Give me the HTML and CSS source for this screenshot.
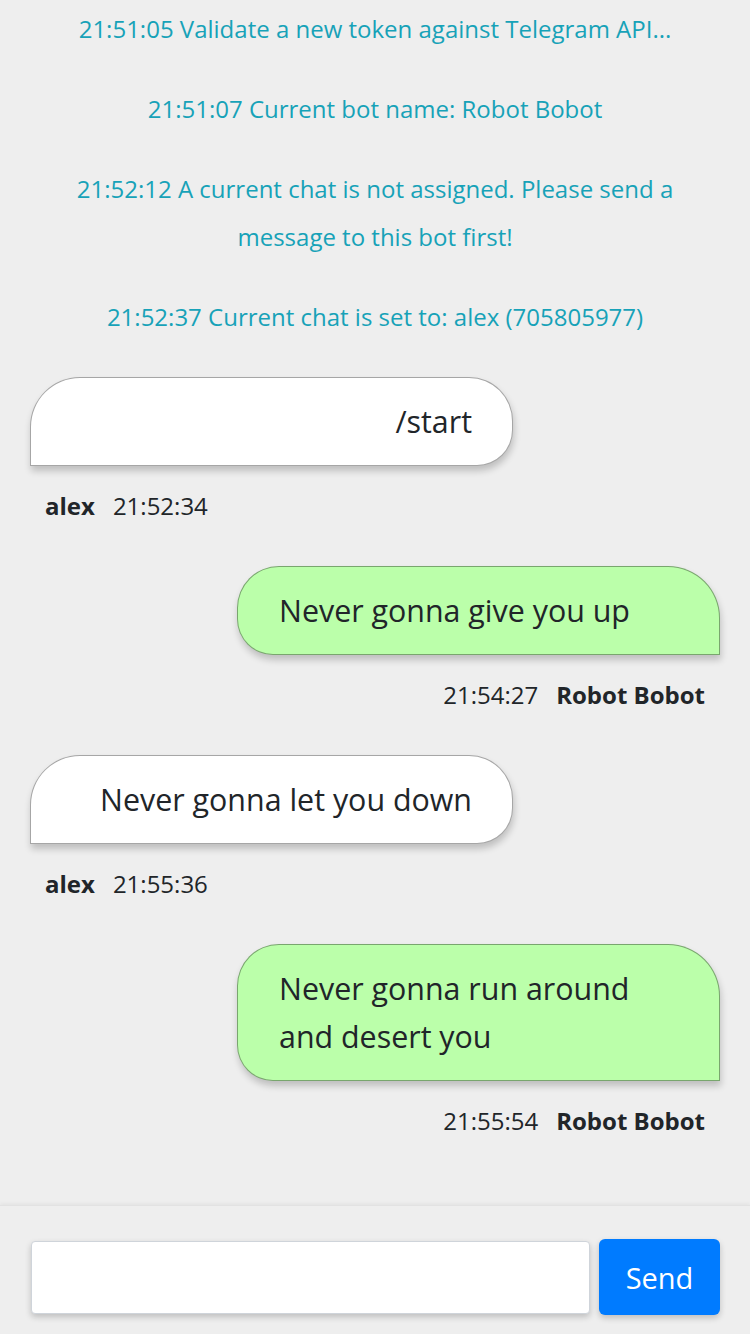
FILE: index.html
```html
<!DOCTYPE html>
<html>
<head>
<meta charset="utf-8">
<link rel="stylesheet" href="styles.css">
</head>
<body>
<div class="app">
  <main class="chat">
    <div class="system">
      <p>21:51:05 Validate a new token against Telegram API...</p>
      <p>21:51:07 Current bot name: Robot Bobot</p>
      <p>21:52:12 A current chat is not assigned. Please send a message to this bot first!</p>
      <p>21:52:37 Current chat is set to: alex (705805977)</p>
    </div>
    <div class="msg in">
      <div class="bubble">/start</div>
      <div class="meta"><b>alex</b><span>21:52:34</span></div>
    </div>
    <div class="msg out">
      <div class="bubble">Never gonna give you up</div>
      <div class="meta"><span>21:54:27</span><b>Robot Bobot</b></div>
    </div>
    <div class="msg in">
      <div class="bubble">Never gonna let you down</div>
      <div class="meta"><b>alex</b><span>21:55:36</span></div>
    </div>
    <div class="msg out">
      <div class="bubble">Never gonna run around and desert you</div>
      <div class="meta"><span>21:55:54</span><b>Robot Bobot</b></div>
    </div>
  </main>
  <footer class="composer">
    <input class="field" type="text">
    <button class="send">Send</button>
  </footer>
</div>
</body>
</html>
```
FILE: styles.css
```css
* { box-sizing: border-box; }
html, body {
  margin: 0;
  padding: 0;
  background: #eeeeee;
  font-family: "Open Sans", "Noto Sans", sans-serif;
  color: #212529;
}
.app {
  height: 1334px;
  display: flex;
  flex-direction: column;
}
.chat {
  flex: 1;
  padding: 5px 30px 0;
  overflow: hidden;
}
.system {
  margin-bottom: 36px;
}
.system p {
  margin: 0 0 32px;
  text-align: center;
  color: #17a2b8;
  font-size: 24px;
  line-height: 48px;
  padding: 0 25px;
}
.system p:last-child { margin-bottom: 0; }
.msg {
  display: flex;
  flex-direction: column;
  margin-bottom: 36px;
}
.msg.in { align-items: flex-start; }
.msg.out { align-items: flex-end; }
.bubble {
  width: 70%;
  font-size: 30.4px;
  line-height: 48px;
  padding: 20px 40px 19px 41px;
  border: 1px solid rgba(0, 0, 0, 0.35);
  box-shadow: 1px 5px 7px rgba(0, 0, 0, 0.2);
}
.msg.in .bubble {
  background: #ffffff;
  text-align: right;
  border-radius: 50px 44px 36px 0;
}
.msg.out .bubble {
  background: #bbffaa;
  text-align: left;
  padding-right: 48px;
  border-radius: 42px 52px 0 36px;
}
.meta {
  margin-top: 16px;
  font-size: 24px;
  line-height: 48px;
  padding: 0 15px;
  display: flex;
  gap: 18px;
}
.meta b { font-weight: 700; }
.composer {
  height: 129px;
  border-top: 1px solid #e2e2e2;
  box-shadow: 0 -2px 3px rgba(0, 0, 0, 0.04);
  display: flex;
  align-items: flex-start;
  gap: 9px;
  padding: 33px 30px 0 31px;
}
.field {
  flex: 1;
  height: 73px;
  margin-top: 2px;
  border: 1px solid #cfd4da;
  border-radius: 4px;
  background: #fff;
  box-shadow: 0 3px 6px rgba(0, 0, 0, 0.2);
  outline: none;
}
.send {
  width: 121px;
  height: 76px;
  border: none;
  border-radius: 6px;
  background: #007bff;
  color: #fff;
  font-family: "Open Sans", "Noto Sans", sans-serif;
  font-size: 29px;
  box-shadow: 0 3px 6px rgba(0, 0, 0, 0.2);
  padding: 0;
}
```
